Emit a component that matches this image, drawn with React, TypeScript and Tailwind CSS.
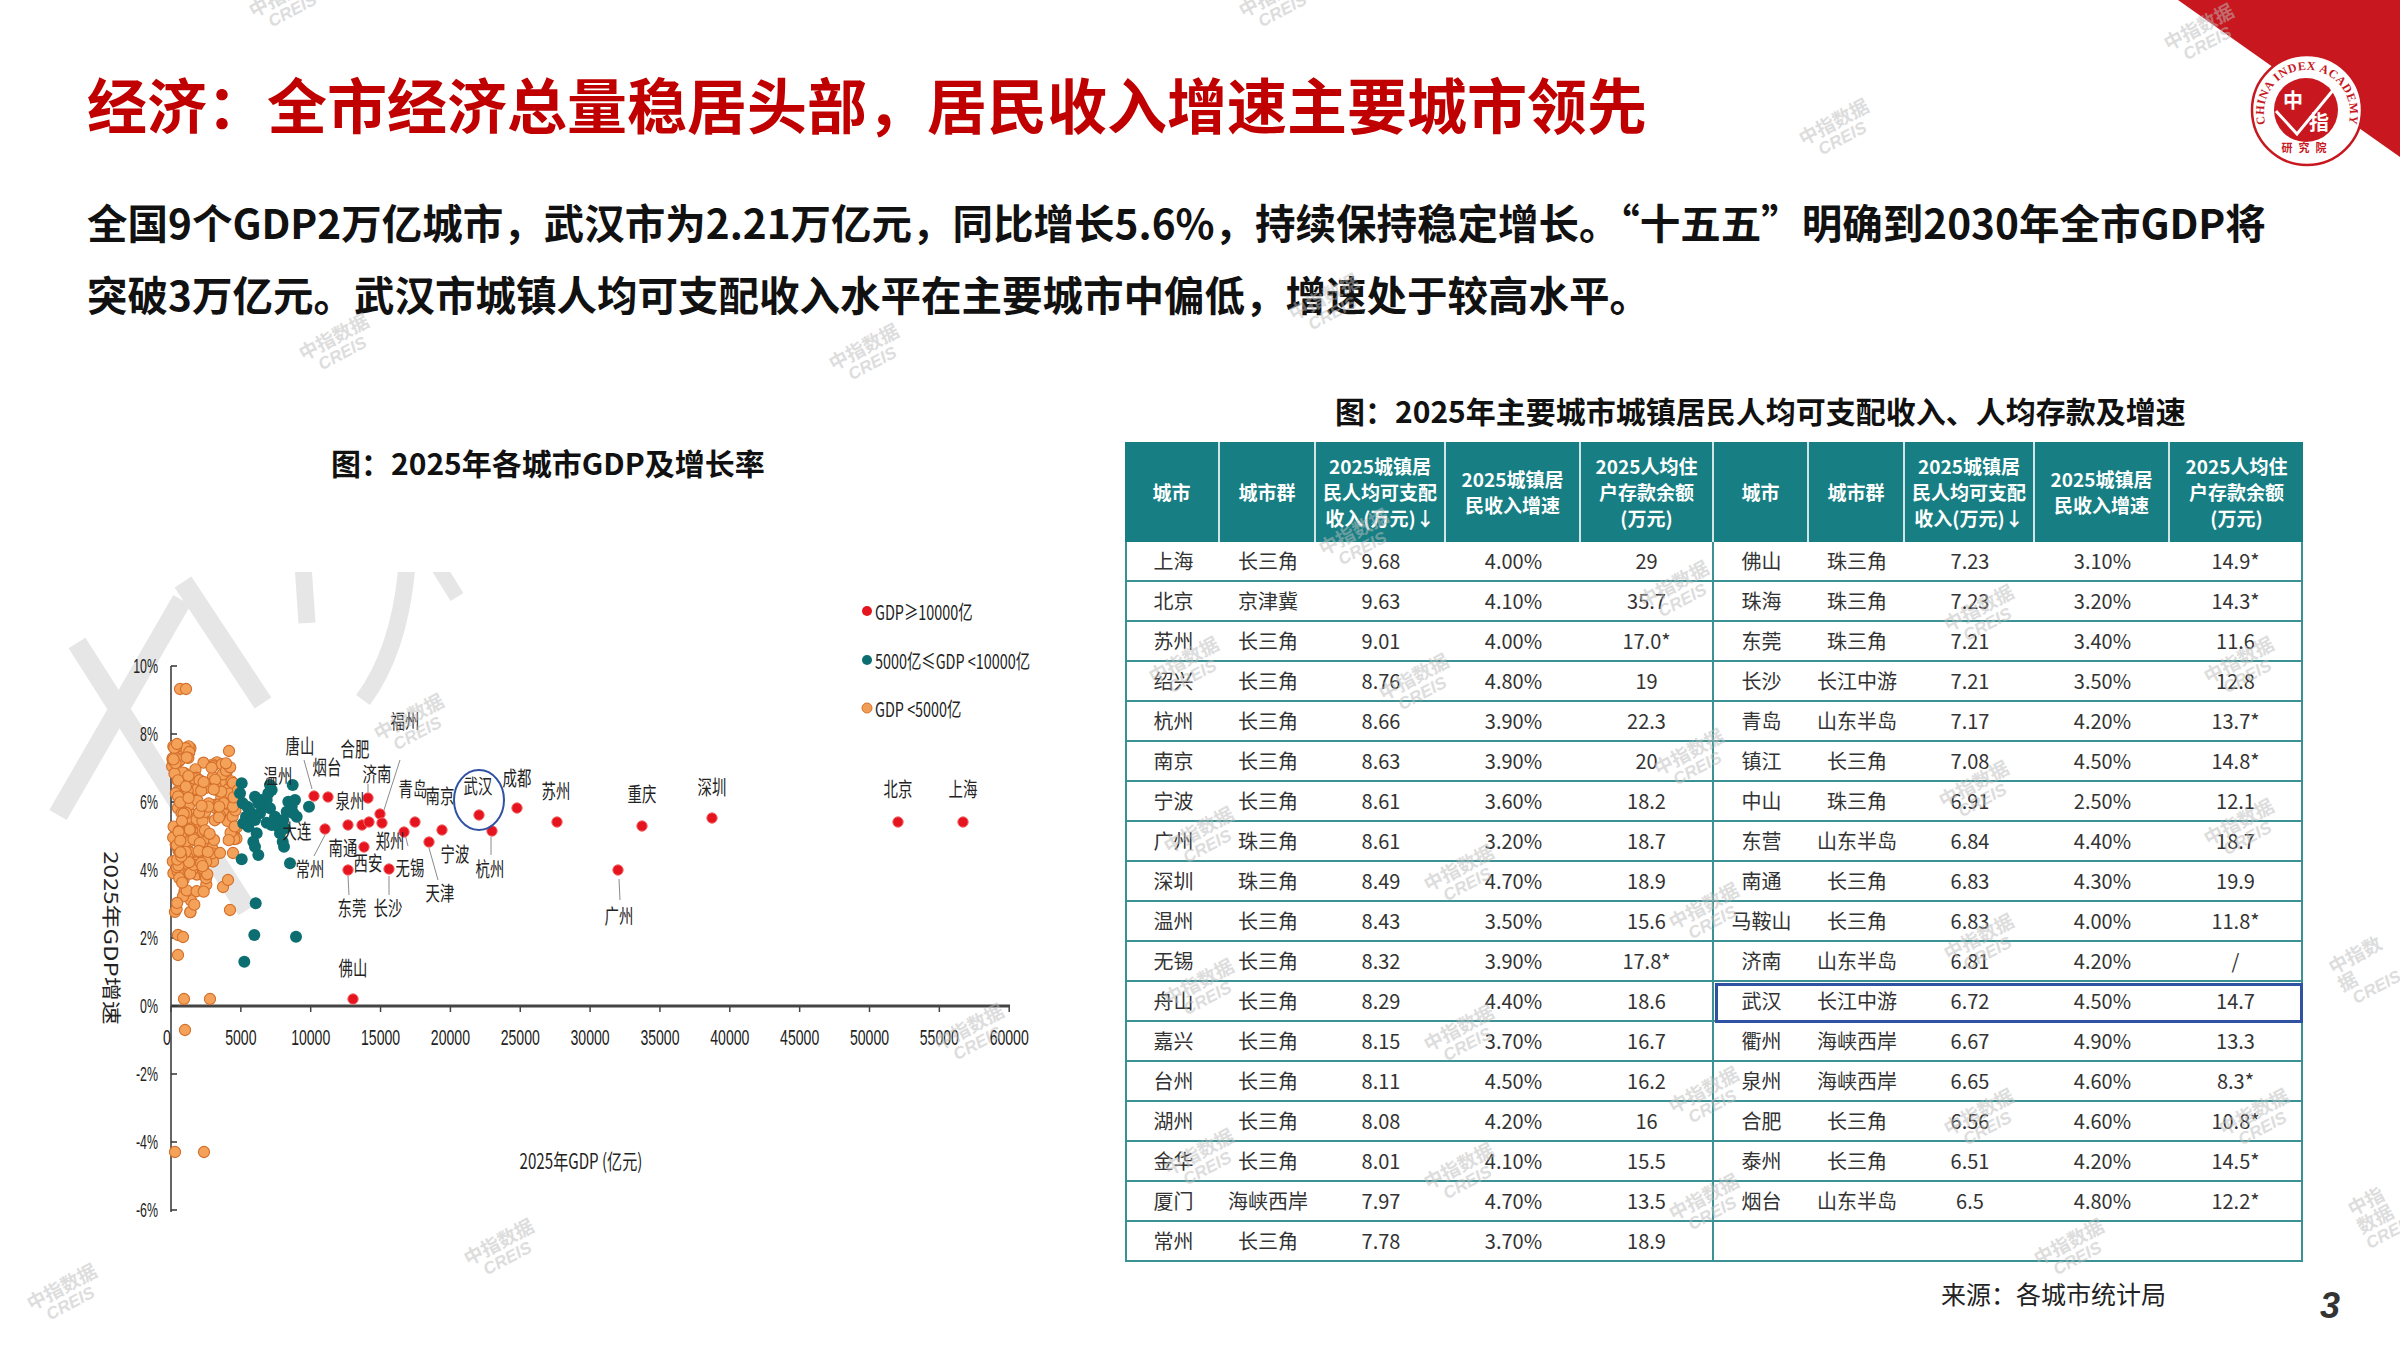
import React from 'react'

type Row = [string, string, string, string, string]

const LEFT: Row[] = [
  ['上海', '长三角', '9.68', '4.00%', '29'],
  ['北京', '京津冀', '9.63', '4.10%', '35.7'],
  ['苏州', '长三角', '9.01', '4.00%', '17.0*'],
  ['绍兴', '长三角', '8.76', '4.80%', '19'],
  ['杭州', '长三角', '8.66', '3.90%', '22.3'],
  ['南京', '长三角', '8.63', '3.90%', '20'],
  ['宁波', '长三角', '8.61', '3.60%', '18.2'],
  ['广州', '珠三角', '8.61', '3.20%', '18.7'],
  ['深圳', '珠三角', '8.49', '4.70%', '18.9'],
  ['温州', '长三角', '8.43', '3.50%', '15.6'],
  ['无锡', '长三角', '8.32', '3.90%', '17.8*'],
  ['舟山', '长三角', '8.29', '4.40%', '18.6'],
  ['嘉兴', '长三角', '8.15', '3.70%', '16.7'],
  ['台州', '长三角', '8.11', '4.50%', '16.2'],
  ['湖州', '长三角', '8.08', '4.20%', '16'],
  ['金华', '长三角', '8.01', '4.10%', '15.5'],
  ['厦门', '海峡西岸', '7.97', '4.70%', '13.5'],
  ['常州', '长三角', '7.78', '3.70%', '18.9'],
]

const RIGHT: (Row | null)[] = [
  ['佛山', '珠三角', '7.23', '3.10%', '14.9*'],
  ['珠海', '珠三角', '7.23', '3.20%', '14.3*'],
  ['东莞', '珠三角', '7.21', '3.40%', '11.6'],
  ['长沙', '长江中游', '7.21', '3.50%', '12.8'],
  ['青岛', '山东半岛', '7.17', '4.20%', '13.7*'],
  ['镇江', '长三角', '7.08', '4.50%', '14.8*'],
  ['中山', '珠三角', '6.91', '2.50%', '12.1'],
  ['东营', '山东半岛', '6.84', '4.40%', '18.7'],
  ['南通', '长三角', '6.83', '4.30%', '19.9'],
  ['马鞍山', '长三角', '6.83', '4.00%', '11.8*'],
  ['济南', '山东半岛', '6.81', '4.20%', '/'],
  ['武汉', '长江中游', '6.72', '4.50%', '14.7'],
  ['衢州', '海峡西岸', '6.67', '4.90%', '13.3'],
  ['泉州', '海峡西岸', '6.65', '4.60%', '8.3*'],
  ['合肥', '长三角', '6.56', '4.60%', '10.8*'],
  ['泰州', '长三角', '6.51', '4.20%', '14.5*'],
  ['烟台', '山东半岛', '6.5', '4.80%', '12.2*'],
  null,
]

const HEAD = [
  ['城市'],
  ['城市群'],
  ['2025城镇居', '民人均可支配', '收入(万元)↓'],
  ['2025城镇居', '民收入增速'],
  ['2025人均住', '户存款余额', '(万元)'],
]

const GRID =
  'grid grid-cols-[95px_96px_130px_135px_133px_95px_96px_130px_135px_133px]'

function Table() {
  const heads = [...HEAD, ...HEAD]
  return (
    <div className="relative mt-[10px] w-[1178px]">
      <div className={`${GRID} h-[100px] bg-[#177f83]`}>
        {heads.map((lines, i) => (
          <div
            key={i}
            className={`flex flex-col items-center justify-center text-[19px] font-bold leading-[26px] text-white ${
              i < 9 ? 'border-r-2 border-white/80' : ''
            }`}
          >
            {lines.map((l) => (
              <span key={l} className="whitespace-nowrap">
                {l}
              </span>
            ))}
          </div>
        ))}
      </div>
      {LEFT.map((l, r) => {
        const right = RIGHT[r]
        const cells = [...l, ...(right ?? ['', '', '', '', ''])]
        return (
          <div key={r} className={`${GRID} h-[40px]`}>
            {cells.map((c, i) => (
              <div
                key={i}
                className={`flex items-center justify-center border-b-2 border-[#3a9294] text-[20px] leading-none text-[#333] ${
                  i === 0 ? 'border-l-2' : ''
                } ${i === 4 || i === 9 ? 'border-r-2' : ''}`}
              >
                {c}
              </div>
            ))}
          </div>
        )
      })}
      {/* 武汉 highlight */}
      <div className="absolute left-[590px] top-[541px] h-[40px] w-[588px] border-[3px] border-[#2f52a3]" />
    </div>
  )
}

function Logo() {
  return (
    <svg width="222" height="170" viewBox="2178 0 222 170" className="shrink-0">
      <polygon points="2178,0 2400,0 2400,157" fill="#c8171e" />
      <circle cx="2307" cy="110" r="55" fill="#fff" stroke="#c8171e" strokeWidth="2.5" />
      <circle cx="2306" cy="110" r="32" fill="#c8171e" />
      <defs>
        <path id="logoArc" d="M 2265 122 A 43 43 0 1 1 2349 122" />
      </defs>
      <text
        fontSize="12"
        fontWeight="700"
        fill="#c8171e"
        letterSpacing="0.6"
        className="font-['Liberation_Serif',serif]"
      >
        <textPath href="#logoArc" startOffset="50%" textAnchor="middle">
          CHINA INDEX ACADEMY
        </textPath>
      </text>
      <polyline
        points="2276,111 2297,134 2334,89"
        fill="none"
        stroke="#fff"
        strokeWidth="3"
      />
      <text x="2293" y="108" fontSize="20" fontWeight="700" fill="#fff" textAnchor="middle">
        中
      </text>
      <text x="2319" y="130" fontSize="20" fontWeight="700" fill="#fff" textAnchor="middle">
        指
      </text>
      <text x="2307" y="152" fontSize="11" fontWeight="700" fill="#c8171e" textAnchor="middle" letterSpacing="6">
        研究院
      </text>
    </svg>
  )
}

function rng(seed: number) {
  let s = seed >>> 0
  return () => {
    s = (Math.imul(s, 1664525) + 1013904223) >>> 0
    return s / 4294967296
  }
}

const ORANGE: [number, number][] = (() => {
  const r = rng(7)
  const pts: [number, number][] = []
  const xmax = (y: number) =>
    y < 760 ? 192 : y < 793 ? 232 : y < 843 ? 242 : y < 877 ? 216 : 208
  let n = 0
  while (n < 190) {
    const y = 805 + (r() + r() - 1) * 100
    if (y < 744 || y > 914) continue
    pts.push([172 + r() * (xmax(y) - 172), y])
    n++
  }
  for (let i = 0; i < 30; i++) {
    const y = 850 + r() * 64
    pts.push([173 + r() * 36, y])
  }
  const extra: [number, number][] = [
    [180, 689], [186, 689], [177, 744], [229, 751], [233, 783], [238, 790],
    [220, 853], [233, 853], [223, 887], [228, 880], [230, 910], [178, 935],
    [183, 937], [178, 955], [184, 999], [210, 999], [185, 1030], [175, 1152],
    [204, 1152],
  ]
  return [...pts, ...extra]
})()

const TEAL: [number, number][] = [
  [241.7, 783.3], [240, 793.3], [242.7, 803.3], [247.3, 806.7], [250, 811.7],
  [246, 816.7], [243.3, 823.3], [248.3, 826.7], [255, 820], [260, 813.3],
  [263.3, 806.7], [258.3, 803.3], [255, 796.7], [268.3, 793.3], [271.7, 790],
  [270, 785], [266.7, 800], [261.7, 800], [270, 808.3], [275, 816.7],
  [266.7, 822.7], [271.7, 825], [278.3, 826.7], [283.3, 820], [286.7, 811.7],
  [291.7, 806.7], [295, 800], [288.3, 801.7], [292.7, 785], [296.7, 816.7],
  [293.3, 813.3], [285, 828.3], [280, 833.3], [282.7, 841.7], [284, 846.7],
  [256.7, 833.3], [253.3, 841.7], [255, 846.7], [258.3, 855], [241.7, 859.3],
  [290, 863.3], [255.7, 903.3], [254.3, 935], [296, 936.7], [244.3, 961.7],
  [309, 806.7],
]

const RED: [number, number][] = [
  [314, 796], [328, 797], [368, 798], [325, 829], [348, 825], [362, 825],
  [369, 822], [380, 814], [382, 823], [364, 847], [404, 832], [415, 822],
  [429, 842], [442, 830], [348, 870], [389, 869], [479, 815], [492, 831],
  [517, 808], [557, 822], [353, 999], [618, 870], [642, 826], [712, 818],
  [898, 822], [963, 822],
]

const LABELS: [string, number, number][] = [
  ['福州', 405, 720], ['唐山', 300, 745], ['合肥', 355, 748], ['烟台', 327, 766],
  ['济南', 377, 773], ['温州', 278, 775], ['泉州', 350, 800], ['青岛', 413, 788],
  ['南京', 440, 795], ['武汉', 478, 785], ['成都', 517, 777], ['苏州', 556, 790],
  ['重庆', 642, 793], ['深圳', 712, 786], ['北京', 898, 788], ['上海', 963, 788],
  ['大连', 297, 830], ['南通', 343, 847], ['郑州', 390, 840], ['西安', 368, 862],
  ['无锡', 410, 867], ['宁波', 455, 853], ['常州', 310, 868], ['杭州', 490, 868],
  ['天津', 440, 892], ['东莞', 352, 907], ['长沙', 388, 907], ['广州', 619, 915],
  ['佛山', 353, 967],
]

const LEADERS: number[][] = [
  [304, 760, 312, 789], [368, 784, 368, 792], [400, 760, 383, 813],
  [314, 856, 325, 835], [438, 880, 429, 848], [349, 895, 348, 876],
  [389, 895, 389, 876], [491, 855, 491, 837], [619, 879, 620, 900],
  [405, 834, 408, 846],
]

const sx = (g: number) => 171 + g * 0.01397
const sy = (p: number) => 1006 - p * 34

function T({
  x,
  y,
  size = 20,
  k = 0.7,
  anchor = 'middle',
  num = false,
  children,
}: {
  x: number
  y: number
  size?: number
  k?: number
  anchor?: 'start' | 'middle' | 'end'
  num?: boolean
  children: React.ReactNode
}) {
  return (
    <text
      transform={`translate(${x} ${y}) scale(${k} 1)`}
      textAnchor={anchor}
      dominantBaseline="central"
      fontSize={size}
      fill="#222"
      className={num ? "font-['Liberation_Sans','Noto_Sans_CJK_SC',sans-serif]" : ''}
    >
      {children}
    </text>
  )
}

function Chart() {
  const yt = [10, 8, 6, 4, 2, 0, -2, -4, -6]
  const xt = Array.from({ length: 13 }, (_, i) => i * 5000)
  return (
    <svg width="1050" height="690" viewBox="30 560 1050 690" className="ml-[30px] mt-[76px] block">
      <defs>
        <clipPath id="wm">
          <rect x="30" y="572" width="1050" height="680" />
        </clipPath>
      </defs>
      {/* faint logo watermark strokes */}
      <g clipPath="url(#wm)" stroke="#e6e6e6" strokeWidth="20" fill="none">
        <line x1="77" y1="643" x2="247" y2="910" />
        <line x1="58" y1="815" x2="182" y2="600" />
        <line x1="183" y1="582" x2="263" y2="703" />
        <line x1="303" y1="565" x2="307" y2="623" strokeWidth="17" />
        <path d="M 363 700 Q 400 650 407 565" strokeWidth="17" />
        <line x1="437" y1="565" x2="457" y2="597" strokeWidth="15" />
      </g>

      {/* axes */}
      <line x1="171" y1="666" x2="171" y2="1212" stroke="#333" strokeWidth="1.5" />
      <line x1="171" y1="1006" x2="1010" y2="1006" stroke="#444" strokeWidth="3" />
      {yt.map((p) => (
        <g key={p}>
          <line x1="171" y1={sy(p)} x2="177" y2={sy(p)} stroke="#333" strokeWidth="1.5" />
          <T x={158} y={sy(p)} anchor="end" num size={20} k={0.62}>
            {`${p}%`}
          </T>
        </g>
      ))}
      {xt.map((g) => (
        <g key={g}>
          <line x1={sx(g)} y1="1006" x2={sx(g)} y2="1012" stroke="#444" strokeWidth="1.5" />
          <T x={sx(g) - (g === 0 ? 4 : 0)} y={1037} num size={22} k={0.64}>
            {g}
          </T>
        </g>
      ))}
      <T x={581} y={1160} size={21} k={0.72}>
        2025年GDP (亿元)
      </T>
      <text
        transform="translate(112 938) rotate(90) scale(1 0.8)"
        textAnchor="middle"
        dominantBaseline="central"
        fontSize="24"
        fill="#222"
      >
        2025年GDP增速
      </text>

      {/* legend */}
      <circle cx="867" cy="611" r="5" fill="#e3161f" />
      <T x={875} y={611} anchor="start" size={20} k={0.72}>
        GDP≥10000亿
      </T>
      <circle cx="867" cy="660" r="5" fill="#0c6e71" />
      <T x={875} y={660} anchor="start" size={20} k={0.72}>
        5000亿≤GDP &lt;10000亿
      </T>
      <circle cx="867" cy="708" r="5" fill="#f29d55" stroke="#d6732c" />
      <T x={875} y={708} anchor="start" size={20} k={0.72}>
        GDP &lt;5000亿
      </T>

      {/* points */}
      {ORANGE.map(([x, y], i) => (
        <circle key={`o${i}`} cx={x} cy={y} r="5.6" fill="#f4a15a" stroke="#d36f2a" strokeWidth="1.1" />
      ))}
      {TEAL.map(([x, y], i) => (
        <circle key={`t${i}`} cx={x} cy={y} r="6" fill="#0c6e71" />
      ))}
      {LEADERS.map(([a, b, c, d], i) => (
        <line key={`l${i}`} x1={a} y1={b} x2={c} y2={d} stroke="#8a8a8a" strokeWidth="1" />
      ))}
      {RED.map(([x, y], i) => (
        <circle key={`r${i}`} cx={x} cy={y} r="5.2" fill="#e5141f" stroke="#f26a6a" strokeWidth="1" />
      ))}
      {LABELS.map(([s, x, y]) => (
        <T key={s} x={x} y={y} size={20} k={0.72}>
          {s}
        </T>
      ))}
      <ellipse cx="479" cy="800" rx="25" ry="30" fill="none" stroke="#2f52a3" strokeWidth="2" />
    </svg>
  )
}

const MARKS = [
  'left-[250px] top-[-18px]',
  'left-[1240px] top-[-18px]',
  'left-[1800px] top-[110px]',
  'left-[2165px] top-[15px]',
  'left-[300px] top-[325px]',
  'left-[830px] top-[335px]',
  'left-[1290px] top-[285px]',
  'left-[375px] top-[705px]',
  'left-[935px] top-[1015px]',
  'left-[465px] top-[1230px]',
  'left-[28px] top-[1275px]',
  'left-[2335px] top-[940px]',
  'left-[2355px] top-[1185px]',
  'left-[1320px] top-[520px]',
  'left-[1640px] top-[572px]',
  'left-[1945px] top-[596px]',
  'left-[2205px] top-[648px]',
  'left-[1150px] top-[648px]',
  'left-[1380px] top-[665px]',
  'left-[1655px] top-[740px]',
  'left-[1940px] top-[772px]',
  'left-[2205px] top-[810px]',
  'left-[1165px] top-[818px]',
  'left-[1425px] top-[856px]',
  'left-[1670px] top-[894px]',
  'left-[1945px] top-[925px]',
  'left-[1165px] top-[970px]',
  'left-[1425px] top-[1016px]',
  'left-[1670px] top-[1078px]',
  'left-[1945px] top-[1100px]',
  'left-[2220px] top-[1100px]',
  'left-[1165px] top-[1140px]',
  'left-[1425px] top-[1154px]',
  'left-[1670px] top-[1185px]',
  'left-[2035px] top-[1230px]',
]

function Watermarks() {
  return (
    <div className="pointer-events-none absolute inset-0">
      {MARKS.map((m) => (
        <div
          key={m}
          className={`absolute ${m} flex -rotate-[28deg] flex-col items-center leading-[20px] text-[#bdbdbd] opacity-50`}
        >
          <span className="text-[19px] font-bold">中指数据</span>
          <span className="font-['Liberation_Sans',sans-serif] text-[17px] font-bold italic">CREIS</span>
        </div>
      ))}
    </div>
  )
}

export default function App() {
  return (
    <div className="relative h-[1350px] w-[2400px] overflow-hidden bg-white font-['Noto_Sans_CJK_SC','Noto_Sans',sans-serif] text-[#111]">
      <div className="flex items-start justify-between">
        <h1 className="whitespace-nowrap pl-[87px] pt-[63px] text-[60px] font-bold leading-[80px] text-[#c00000]">
          经济：全市经济总量稳居头部，居民收入增速主要城市领先
        </h1>
        <Logo />
      </div>

      <p className="mt-[16px] whitespace-nowrap pl-[87px] text-[40.5px] font-bold leading-[72px]">
        全国9个GDP2万亿城市，武汉市为2.21万亿元，同比增长5.6%，持续保持稳定增长。“十五五”明确到2030年全市GDP将
        <br />
        突破3万亿元。武汉市城镇人均可支配收入水平在主要城市中偏低，增速处于较高水平。
      </p>

      <div className="mt-[58px] flex">
        <div className="w-[1125px] shrink-0">
          <div className="mt-[52px] whitespace-nowrap pl-[331px] text-[30px] font-bold leading-[44px]">
            图：2025年各城市GDP及增长率
          </div>
          <Chart />
        </div>

        <div className="w-[1178px] shrink-0">
          <div className="whitespace-nowrap pl-[210px] text-[30px] font-bold leading-[44px]">
            图：2025年主要城市城镇居民人均可支配收入、人均存款及增速
          </div>
          <Table />
          <div className="mt-[14px] flex items-start whitespace-nowrap">
            <span className="ml-[816px] text-[25px] leading-[34px] text-[#222]">来源：各城市统计局</span>
            <span className="ml-[154px] mt-[10px] font-['Liberation_Sans',sans-serif] text-[36px] font-bold italic leading-[40px] text-[#333]">
              3
            </span>
          </div>
        </div>
      </div>

      <Watermarks />
    </div>
  )
}
